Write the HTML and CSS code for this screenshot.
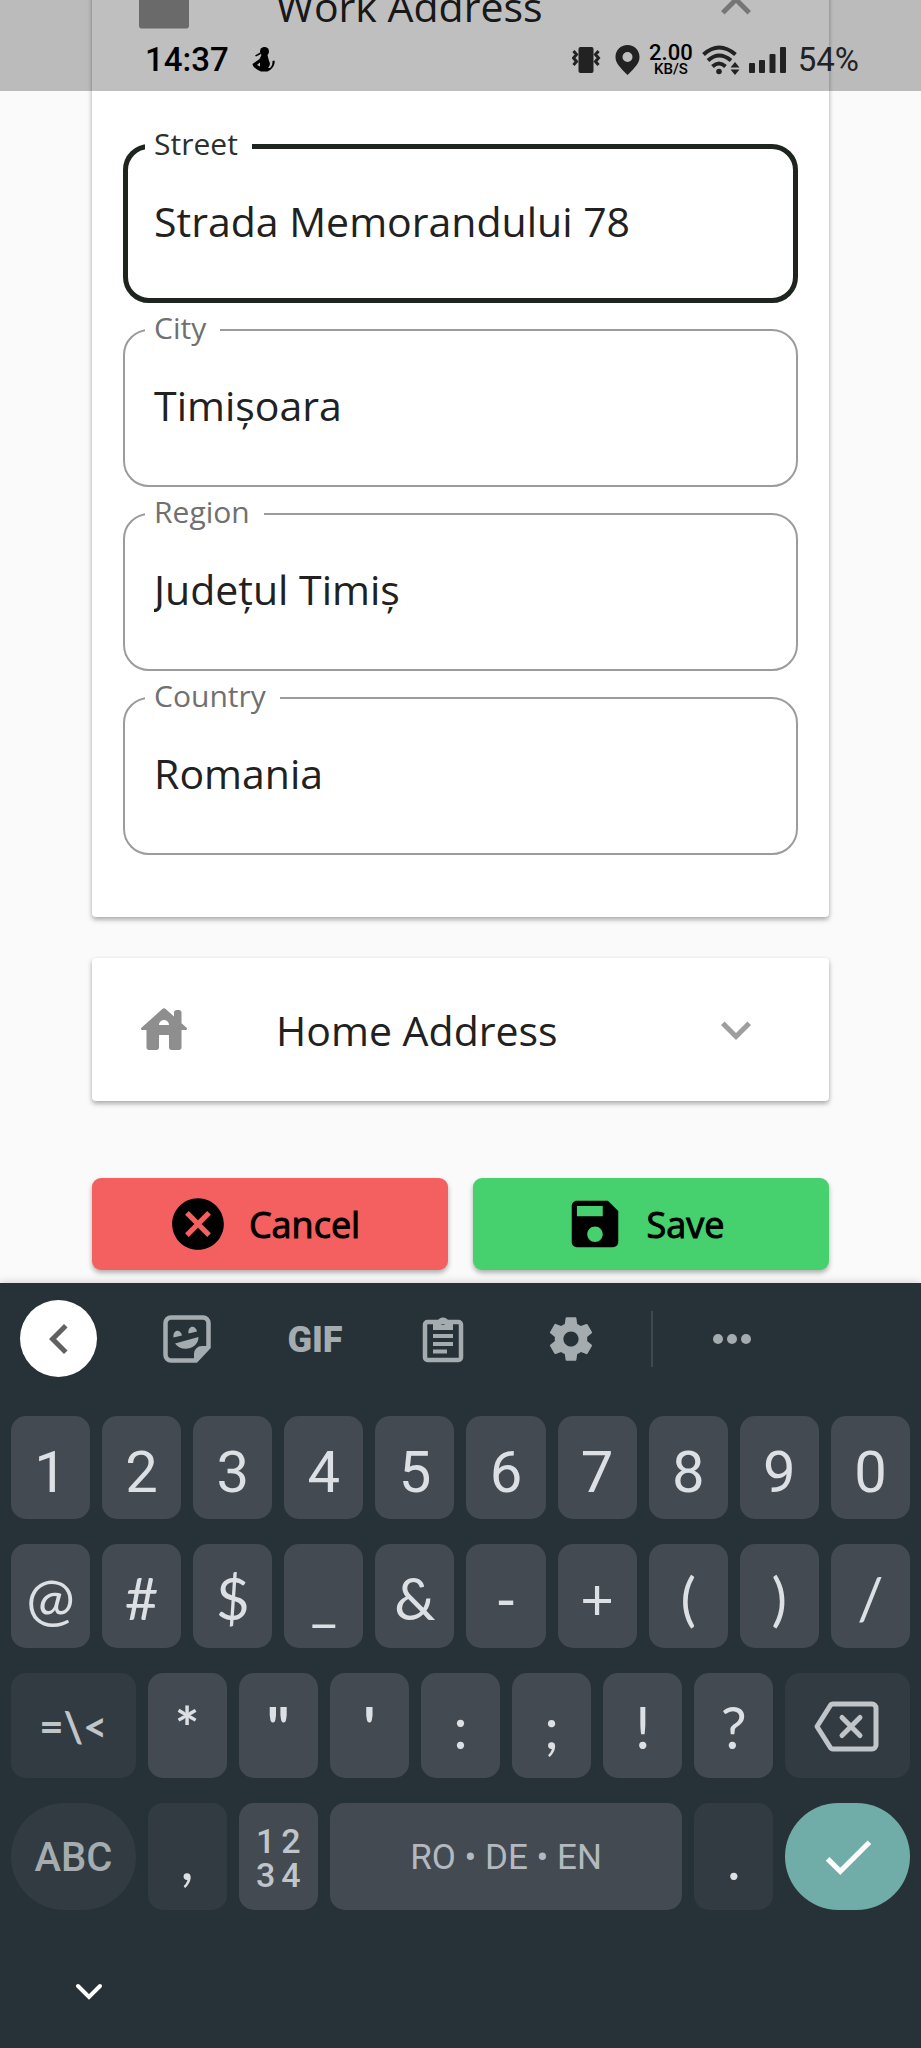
FILE: index.html
```html
<!DOCTYPE html>
<html lang="en">
<head>
<meta charset="utf-8">
<meta name="viewport" content="width=device-width, initial-scale=1">
<title>Edit addresses</title>
<link rel="stylesheet" href="styles.css">
</head>
<body>
<div class="status-bar">
  <span class="status-text time">14:37</span>
  <svg class="figure" width="24" height="26" viewBox="0 0 24 26" aria-hidden="true"><circle cx="12.500" cy="4.500" r="4.500"/><path d="M9.500 8h6l1.500 6c1.500 2 1 5-1 7h2c2-2 2.500-4 2.500-7l2-.5c1 5-3 9.500-7 11H9c-4-1.500-8-4-8.500-7.500l7-5zM3 8.500l5-3 1 1.500-5 2.500z"/><path class="gap" d="M5 18l3-2.500v4z"/></svg>
  <div class="status-icons">
    <svg width="34" height="28" viewBox="0 0 34 28" aria-hidden="true"><rect x="6.500" y="1" width="15" height="26" rx="2"/><path class="line" d="M1.500 5l3 3.500-3 3.500 3 3.500-3 3.500M26.500 5l-3 3.500 3 3.500-3 3.500 3 3.500"/></svg>
    <svg width="25" height="30" viewBox="0 0 25 30" aria-hidden="true"><path fill-rule="evenodd" d="M12.500 0C5.500 0 .5 5.300.5 12c0 6 4 10 12 18 8-8 12-12 12-18C24.500 5.300 19.500 0 12.500 0zm0 7a5 5 0 1 1 0 10 5 5 0 0 1 0-10z"/></svg>
    <span class="rate"><span>2.00</span><span class="unit">KB/S</span></span>
    <svg width="38" height="30" viewBox="0 0 38 30" aria-hidden="true"><path class="wave" d="M1.500 9.500Q17 -4.500 33.500 9.500M6 15.500q11-10 23 0M10.500 21.500q6.500-6 13 0"/><circle cx="17" cy="26.500" r="2.800"/><path d="M28.500 22.500h9L33 17zM28.500 24.500h9L33 30z"/></svg>
    <svg width="40" height="28" viewBox="0 0 40 28" aria-hidden="true"><rect y="17" width="6" height="10" rx="1"/><rect x="10" y="14" width="6" height="13" rx="1"/><rect x="20.500" y="8" width="6" height="19" rx="1"/><rect x="31" y="1" width="6" height="26" rx="1"/></svg>
    <span class="status-text">54%</span>
  </div>
</div>

<main class="page">
  <section class="card">
    <button class="card-head" type="button" aria-expanded="true">
      <svg class="card-icon" viewBox="0 0 24 24" aria-hidden="true"><path d="M20 6h-4V4c0-1.110-.89-2-2-2h-4c-1.110 0-2 .89-2 2v2H4c-1.110 0-2 .89-2 2v12c0 .6.4 1 1 1h18c.6 0 1-.4 1-1V8c0-1.110-.89-2-2-2zm-6 0h-4V4h4v2z"/></svg>
      <span class="card-title">Work Address</span>
      <svg class="card-arrow" viewBox="0 0 24 24" aria-hidden="true"><path d="M12 8l-6 6 1.410 1.410L12 10.830l4.590 4.580L18 14z"/></svg>
    </button>
    <form class="fields">
      <fieldset class="field active"><legend><label for="street">Street</label></legend><input id="street" type="text" value="Strada Memorandului 78"></fieldset>
      <fieldset class="field"><legend><label for="city">City</label></legend><input id="city" type="text" value="Timișoara"></fieldset>
      <fieldset class="field"><legend><label for="region">Region</label></legend><input id="region" type="text" value="Județul Timiș"></fieldset>
      <fieldset class="field"><legend><label for="country">Country</label></legend><input id="country" type="text" value="Romania"></fieldset>
    </form>
  </section>

  <section class="card">
    <button class="card-head" type="button" aria-expanded="false">
      <svg class="card-icon" viewBox="0 0 24 24" aria-hidden="true"><path d="M19 9.300V5c0-.55-.45-1-1-1h-1c-.55 0-1 .45-1 1v1.600l-3.330-3c-.38-.34-.96-.34-1.340 0l-8.360 7.530c-.34.3-.13.87.33.87H5v7c0 .55.45 1 1 1h3c.55 0 1-.45 1-1v-5h4v5c0 .55.45 1 1 1h3c.55 0 1-.45 1-1v-7h1.700c.46 0 .68-.57.33-.87L19 9.300zM10 10c0-1.100.9-2 2-2s2 .9 2 2h-4z"/></svg>
      <span class="card-title">Home Address</span>
      <svg class="card-arrow" viewBox="0 0 24 24" aria-hidden="true"><path d="M16.590 8.590L12 13.170 7.410 8.590 6 10l6 6 6-6z"/></svg>
    </button>
  </section>

  <div class="actions">
    <button class="action cancel" type="button">
      <svg viewBox="0 0 24 24" aria-hidden="true"><path d="M12 2C6.470 2 2 6.470 2 12s4.470 10 10 10 10-4.470 10-10S17.530 2 12 2zm5 13.590L15.590 17 12 13.410 8.410 17 7 15.590 10.590 12 7 8.410 8.410 7 12 10.590 15.590 7 17 8.410 13.410 12 17 15.590z"/></svg>
      Cancel
    </button>
    <button class="action save" type="button">
      <svg viewBox="0 0 24 24" aria-hidden="true"><path d="M17 3H5c-1.110 0-2 .9-2 2v14c0 1.100.89 2 2 2h14c1.100 0 2-.9 2-2V7l-4-4zm-5 16c-1.660 0-3-1.340-3-3s1.340-3 3-3 3 1.340 3 3-1.340 3-3 3zm3-10H5V5h10v4z"/></svg>
      Save
    </button>
  </div>
</main>

<div class="keyboard">
  <div class="toolbar">
    <button class="back" type="button" aria-label="Back"><svg width="60" height="60" viewBox="0 0 24 24" aria-hidden="true"><path d="M15.410 7.410L14 6l-6 6 6 6 1.410-1.410L10.830 12z"/></svg></button>
    <div class="tools">
      <button class="tool" type="button" aria-label="Stickers"><svg width="48" height="48" viewBox="0 0 48 48" aria-hidden="true"><path class="outline" d="M8 2.500h32a5.500 5.500 0 0 1 5.500 5.500v24L33 45.500H8A5.500 5.500 0 0 1 2.500 40V8A5.500 5.500 0 0 1 8 2.500z"/><path d="M31 47V39a8 8 0 0 1 8-8h8zM10.500 22.500c-1-8 7-9 8.500-2zM25.500 18.500c-1-8 7-9 8.500-2zM12 28.500L35.500 22c0 12-17 16-23.500 6.500z"/></svg></button>
      <button class="tool gif" type="button">GIF</button>
      <button class="tool" type="button" aria-label="Clipboard"><svg width="48" height="48" viewBox="0 0 48 48" aria-hidden="true"><rect class="outline" x="6" y="7" width="36" height="38" rx="2.500"/><path fill-rule="evenodd" d="M14 15V6h4.500a6 6 0 0 1 11 0H34v9zM24 5a2.500 2.500 0 1 0 0 5 2.500 2.500 0 0 0 0-5zM14 19h20v4H14zM14 27h20v4H14zM14 34.500h14v4H14z"/></svg></button>
      <button class="tool" type="button" aria-label="Settings"><svg width="52" height="52" viewBox="0 0 24 24" aria-hidden="true"><path d="M19.430 12.980c.04-.32.07-.64.07-.98s-.03-.66-.07-.98l2.110-1.650c.19-.15.24-.42.12-.64l-2-3.460c-.12-.22-.39-.3-.61-.22l-2.490 1c-.52-.4-1.080-.73-1.690-.98l-.38-2.650C14.460 2.180 14.250 2 14 2h-4c-.25 0-.46.18-.49.42l-.38 2.650c-.61.25-1.170.59-1.690.98l-2.490-1c-.23-.09-.49 0-.61.22l-2 3.460c-.13.22-.07.49.12.64l2.110 1.650c-.04.32-.07.65-.07.98s.03.66.07.98l-2.110 1.650c-.19.15-.24.42-.12.64l2 3.460c.12.22.39.3.61.22l2.490-1c.52.4 1.080.73 1.690.98l.38 2.650c.03.24.24.42.49.42h4c.25 0 .46-.18.49-.42l.38-2.650c.61-.25 1.170-.59 1.690-.98l2.490 1c.23.09.49 0 .61-.22l2-3.460c.12-.22.07-.49-.12-.64l-2.110-1.650zM12 15.500c-1.930 0-3.500-1.570-3.500-3.500s1.570-3.500 3.500-3.500 3.500 1.570 3.500 3.500-1.570 3.500-3.500 3.500z"/></svg></button>
    </div>
    <span class="divider"></span>
    <button class="tool" type="button" aria-label="More"><svg width="48" height="48" viewBox="0 0 48 48" aria-hidden="true"><circle cx="10" cy="24" r="5"/><circle cx="24" cy="24" r="5"/><circle cx="38" cy="24" r="5"/></svg></button>
  </div>

  <div class="keys">
    <button class="key digit" type="button">1</button><button class="key digit" type="button">2</button><button class="key digit" type="button">3</button><button class="key digit" type="button">4</button><button class="key digit" type="button">5</button><button class="key digit" type="button">6</button><button class="key digit" type="button">7</button><button class="key digit" type="button">8</button><button class="key digit" type="button">9</button><button class="key digit" type="button">0</button>
    <button class="key" type="button">@</button><button class="key" type="button">#</button><button class="key" type="button">$</button><button class="key" type="button">_</button><button class="key" type="button">&amp;</button><button class="key" type="button">-</button><button class="key" type="button">+</button><button class="key" type="button">(</button><button class="key" type="button">)</button><button class="key" type="button">/</button>
    <button class="key wide dim symbols" type="button">=\&lt;</button><button class="key strong" type="button">*</button><button class="key strong" type="button">"</button><button class="key strong" type="button">'</button><button class="key" type="button">:</button><button class="key" type="button">;</button><button class="key" type="button">!</button><button class="key" type="button">?</button>
    <button class="key wide dim" type="button" aria-label="Backspace"><svg width="70" height="54" viewBox="0 0 70 54" aria-hidden="true"><path class="erase" d="M20 4h39a4 4 0 0 1 4 4v37a4 4 0 0 1-4 4H20q-2 0-3-2L4 26.500 17 6q1-2 3-2z"/><path class="erase cross" d="M29 17.500l18 18M47 17.500l-18 18"/></svg></button>
    <button class="key wide dim pill letters" type="button">ABC</button><button class="key dim" type="button">,</button>
    <button class="key numpad" type="button"><span>1</span><span>2</span><span>3</span><span>4</span></button>
    <button class="key space" type="button">RO • DE • EN</button><button class="key dim" type="button">.</button>
    <button class="key wide pill enter" type="button" aria-label="Done"><svg width="62" height="62" viewBox="0 0 24 24" aria-hidden="true"><path d="M9 16.170L4.830 12l-1.420 1.410L9 19 21 7l-1.410-1.410z"/></svg></button>
  </div>

  <button class="hide" type="button" aria-label="Hide keyboard"><svg width="30" height="20" viewBox="0 0 30 20" aria-hidden="true"><path d="M4 4l11 11L26 4"/></svg></button>
</div>
</body>
</html>
```

FILE: styles.css
```css
* {
  box-sizing: border-box;
}

body {
  position: relative;
  display: flex;
  flex-direction: column;
  min-height: 100vh;
  margin: 0;
  overflow: hidden;
  background: #fafafa;
  color: #212121;
  font-family: "Open Sans", "Noto Sans", sans-serif;
}

button {
  margin: 0;
  padding: 0;
  border: 0;
  background: none;
  color: inherit;
  font: inherit;
}

svg {
  display: block;
  flex: none;
  fill: currentColor;
}

/* Translucent system bar over the scrolled page */
.status-bar {
  position: absolute;
  inset: 0 0 auto;
  z-index: 1;
  display: flex;
  align-items: center;
  height: 91px;
  padding: 29px 62px 0 145px;
  background: rgba(0, 0, 0, 0.25);
  color: #222;
  font-family: Roboto, sans-serif;
}

.status-text {
  font-size: 33px;
  line-height: 40px;
}

.time,
.figure {
  color: #000;
  font-weight: 500;
}

.figure {
  margin-left: 23px;
}

.figure .gap {
  fill: #bfbfbf;
}

.status-icons {
  display: flex;
  align-items: center;
  gap: 9px;
  margin-left: auto;
}

.status-icons .line,
.status-icons .wave {
  fill: none;
  stroke: currentColor;
  stroke-width: 3;
}

.status-icons .wave {
  stroke-width: 4;
}

.rate {
  display: flex;
  flex-direction: column;
  align-items: center;
  color: #000;
  font-size: 22px;
  font-weight: 500;
  line-height: 18px;
}

.rate .unit {
  font-size: 15px;
  line-height: 15px;
}

/* Address form */
.page {
  margin-top: -66px;
  padding: 0 10% 13px;
}

.card {
  margin-bottom: 41px;
  border-radius: 4px;
  background: #fff;
  box-shadow: 0 3px 5px rgba(0, 0, 0, 0.26), 0 1px 4px rgba(0, 0, 0, 0.1);
}

.card-head {
  display: flex;
  align-items: center;
  width: 100%;
  height: 143px;
  padding: 0 63px 0 42px;
  text-align: left;
}

.card-icon {
  width: 60px;
  height: 60px;
  color: #8e8e8e;
}

.card-title {
  flex: 1;
  margin-left: 82px;
  font-size: 41px;
  line-height: 56px;
}

.card-arrow {
  width: 60px;
  height: 60px;
  color: #9e9e9e;
}

.fields {
  display: flex;
  flex-direction: column;
  gap: 11px;
  padding: 53px 31px 62px;
}

.field {
  min-width: 0;
  margin: 0;
  padding: 0 20px 21px;
  border: 2px solid #9c9c9c;
  border-radius: 26px;
}

.field legend {
  padding: 0 14px 4px 9px;
  color: #707070;
  font-size: 30px;
  line-height: 28px;
}

.field.active {
  padding: 0 17px 18px;
  border: 5px solid #1e241e;
}

.field.active legend {
  color: #2c302c;
}

.field input {
  display: block;
  width: 100%;
  height: 118px;
  padding: 0 9px;
  border: 0;
  outline: 0;
  background: none;
  color: #212121;
  font: inherit;
  font-size: 41px;
}

.actions {
  display: flex;
  gap: 25px;
  margin-top: 77px;
}

.action {
  display: flex;
  flex: 1;
  align-items: center;
  justify-content: center;
  gap: 20px;
  height: 92px;
  padding-right: 13px;
  border-radius: 9px;
  box-shadow: 0 3px 5px rgba(0, 0, 0, 0.3);
  color: #000;
  font-size: 36px;
  -webkit-text-stroke: 1px #000;
}

.action svg {
  width: 62px;
  height: 62px;
}

.cancel {
  background: #f45f5f;
}

.save {
  background: #46d16e;
}

/* On-screen keyboard */
.keyboard {
  flex: 1;
  padding: 17px 11px 0;
  background: #273238;
  box-shadow: 0 -1px 8px rgba(0, 0, 0, 0.16);
  color: #dcdfe3;
  font-family: Lato, sans-serif;
}

.toolbar {
  display: flex;
  align-items: center;
  padding-left: 9px;
  color: #a5acb0;
}

.back {
  display: grid;
  place-items: center;
  width: 77px;
  height: 77px;
  border-radius: 50%;
  background: #fff;
  color: #616161;
}

.tools {
  display: flex;
  gap: 72px;
  margin-left: 62px;
}

.tool {
  display: flex;
  align-items: center;
  justify-content: center;
  width: 56px;
  height: 56px;
}

.tool .outline {
  fill: none;
  stroke: currentColor;
  stroke-width: 4.5;
}

.gif {
  padding-top: 2px;
  font-family: Roboto, sans-serif;
  font-size: 36px;
  font-weight: 900;
}

.divider {
  width: 2px;
  height: 56px;
  margin: 0 51px 0 52px;
  background: #3f494f;
}

.keys {
  display: grid;
  grid-template-columns: repeat(20, 1fr);
  grid-template-rows: 103px 104px 105px 107px;
  gap: 25px 12px;
  margin-top: 39px;
}

.key {
  display: flex;
  grid-column: span 2;
  align-items: center;
  justify-content: center;
  min-width: 0;
  padding-top: 3px;
  border-radius: 15px;
  background: #434a51;
  font-size: 58px;
  line-height: 70px;
}

.digit {
  padding-top: 8px;
  font-family: Roboto, sans-serif;
}

.strong {
  font-weight: 700;
}

.wide {
  grid-column: span 3;
}

.dim {
  background: #313b41;
}

.pill {
  border-radius: 54px;
}

.symbols {
  padding: 0;
  color: #c0c5ca;
  font-size: 42px;
  font-weight: 700;
}

.letters {
  color: #a5acb0;
  font-family: Roboto, sans-serif;
  font-size: 40px;
  font-weight: 500;
}

.numpad {
  display: grid;
  grid-template-columns: auto auto;
  align-content: center;
  gap: 0 6px;
  color: #c0c5ca;
  font-family: Roboto, sans-serif;
  font-size: 34px;
  font-weight: 500;
  line-height: 34px;
}

.space {
  grid-column: span 8;
  color: #b3b9bf;
  font-family: Roboto, sans-serif;
  font-size: 35px;
}

.enter {
  padding: 0;
  background: #70ada8;
  color: #fff;
}

.erase {
  fill: none;
  stroke: #c0c5ca;
  stroke-width: 5;
  stroke-linejoin: round;
  stroke-linecap: round;
}

.hide {
  display: block;
  margin: 72px 0 0 63px;
}

.hide path {
  fill: none;
  stroke: #fff;
  stroke-width: 4;
  stroke-linecap: round;
}
```
